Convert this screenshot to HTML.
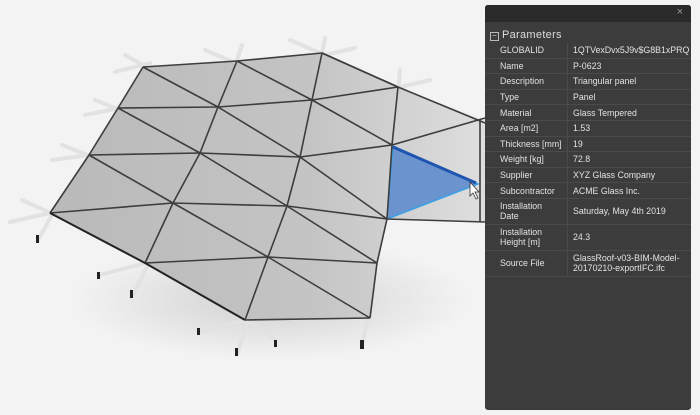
<!DOCTYPE html>
<html><head><style>
body{margin:0;width:700px;height:415px;overflow:hidden;background:#f3f3f3;font-family:"Liberation Sans",sans-serif;position:relative}
#p{position:absolute;left:485px;top:5px;width:206px;height:405px;background:rgba(52,52,52,0.96);border-radius:3px}
#hd{height:17px;background:#2a2a2a;border-radius:3px 3px 0 0;color:#999;font-size:11px;text-align:right;padding-right:8px;line-height:15px}
#ph{position:absolute;top:24px;left:5px;color:#ddd;font-size:11px;letter-spacing:.3px}
#ph span{display:inline-block;width:7px;height:7px;border:1px solid #bbb;font-size:8px;line-height:6px;text-align:center;margin-right:3px;vertical-align:0}
table{position:absolute;top:38px;left:0;width:206px;border-collapse:collapse;table-layout:fixed;font-size:8.8px;color:#e2e2e2}
td{border-bottom:1px solid #4a4a4a;height:14.6px;padding:0 0 0 15px;line-height:10px;white-space:nowrap;overflow:hidden}
td+td{border-left:1px solid #4a4a4a;padding-left:5px}
td.a{width:67px}
tr.t td{height:25px}
</style></head><body>
<svg width="700" height="415" style="position:absolute;left:0;top:0">
<defs>
<linearGradient id="g" x1="0" y1="0" x2="1" y2="0"><stop offset="0" stop-color="#b9b9b9"/><stop offset="0.6" stop-color="#c4c4c4"/><stop offset="1" stop-color="#dedede"/></linearGradient>
<radialGradient id="s" cx="0.5" cy="0.5" r="0.5"><stop offset="0" stop-color="#d0d0d0"/><stop offset="1" stop-color="#f3f3f3"/></radialGradient>
</defs>
<ellipse cx="270" cy="300" rx="200" ry="60" fill="url(#s)"/>
<g stroke="#e2e2e2" stroke-width="4" stroke-linecap="round">
<line x1="125" y1="55" x2="160" y2="75"/><line x1="115" y1="72" x2="150" y2="63"/>
<line x1="205" y1="50" x2="240" y2="65"/><line x1="242" y1="45" x2="232" y2="75"/>
<line x1="290" y1="40" x2="325" y2="55"/><line x1="325" y1="38" x2="320" y2="65"/><line x1="325" y1="55" x2="355" y2="48"/>
<line x1="400" y1="70" x2="398" y2="95"/><line x1="400" y1="87" x2="430" y2="80"/>
<line x1="95" y1="100" x2="125" y2="112"/><line x1="85" y1="115" x2="120" y2="108"/>
<line x1="62" y1="145" x2="95" y2="158"/><line x1="52" y1="160" x2="90" y2="155"/>
<line x1="22" y1="200" x2="55" y2="215"/><line x1="10" y1="222" x2="50" y2="213"/><line x1="52" y1="215" x2="38" y2="240"/>
<line x1="100" y1="275" x2="145" y2="263"/><line x1="148" y1="265" x2="133" y2="295"/>
<line x1="200" y1="332" x2="245" y2="320"/><line x1="247" y1="323" x2="237" y2="355"/><line x1="247" y1="320" x2="275" y2="340"/>
<line x1="368" y1="318" x2="362" y2="345"/>
</g>
<g fill="#222"><rect x="36" y="235" width="3" height="8"/><rect x="130" y="290" width="3" height="8"/><rect x="97" y="272" width="3" height="7"/><rect x="197" y="328" width="3" height="7"/><rect x="235" y="348" width="3" height="8"/><rect x="274" y="340" width="3" height="7"/><rect x="360" y="340" width="4" height="9"/></g>
<polygon points="143,67 237,61 322,53 398,87 480,119 485,120 485,222 387,219 377,263 370,318 245,320 145,263 50,213 89,155 118,108" fill="url(#g)"/>
<polygon points="393,146 478,184 387,219" fill="#6b94cf" stroke="#3aa0e8" stroke-width="1.5"/>
<line x1="393" y1="147" x2="476" y2="183" stroke="#1f55b0" stroke-width="3"/>
<g fill="none" stroke="#3d3d3d" stroke-width="1.6" stroke-linejoin="round">
<polyline points="143,67 237,61 322,53 398,87 485,123"/>
<polyline points="118,108 218,107 312,100 398,87"/>
<polyline points="89,155 200,153 300,157 392,145 485,118"/>
<polyline points="50,213 173,203 287,206 387,219 485,222"/>
<polyline points="145,263 268,257 377,263"/>
<polyline points="245,320 370,318"/>
<polyline points="143,67 118,108 89,155 50,213"/>
<polyline points="237,61 218,107 200,153 173,203 145,263"/>
<polyline points="322,53 312,100 300,157 287,206 268,257 245,320"/>
<polyline points="398,87 392,145 387,219 377,263 370,318"/>
<polyline points="480,119 480,222"/>
<polyline points="143,67 218,107 300,157 387,219"/>
<polyline points="237,61 312,100 392,145"/>
<polyline points="322,53 398,87"/>
<polyline points="118,108 200,153 287,206 377,263"/>
<polyline points="89,155 173,203 268,257 370,318"/>
<polyline points="50,213 145,263 245,320" stroke="#222" stroke-width="2"/>
</g>
<path d="M470,182 l0,14 l3,-3 l3,6 l2,-1 l-3,-6 l4,0 z" fill="#fff" stroke="#333" stroke-width="0.8"/>
</svg>
<div id="p"><div id="hd">×</div>
<div id="ph"><span>−</span>Parameters</div>
<table>
<tr><td class="a">GLOBALID</td><td>1QTVexDvx5J9v$G8B1xPRQ</td></tr>
<tr><td class="a">Name</td><td>P-0623</td></tr>
<tr><td class="a">Description</td><td>Triangular panel</td></tr>
<tr><td class="a">Type</td><td>Panel</td></tr>
<tr><td class="a">Material</td><td>Glass Tempered</td></tr>
<tr><td class="a">Area [m2]</td><td>1.53</td></tr>
<tr><td class="a">Thickness [mm]</td><td>19</td></tr>
<tr><td class="a">Weight [kg]</td><td>72.8</td></tr>
<tr><td class="a">Supplier</td><td>XYZ Glass Company</td></tr>
<tr><td class="a">Subcontractor</td><td>ACME Glass Inc.</td></tr>
<tr class="t"><td class="a">Installation<br>Date</td><td>Saturday, May 4th 2019</td></tr>
<tr class="t"><td class="a">Installation<br>Height [m]</td><td>24.3</td></tr>
<tr class="t"><td class="a">Source File</td><td>GlassRoof-v03-BIM-Model-<br>20170210-exportIFC.ifc</td></tr>
</table></div>
</body></html>
